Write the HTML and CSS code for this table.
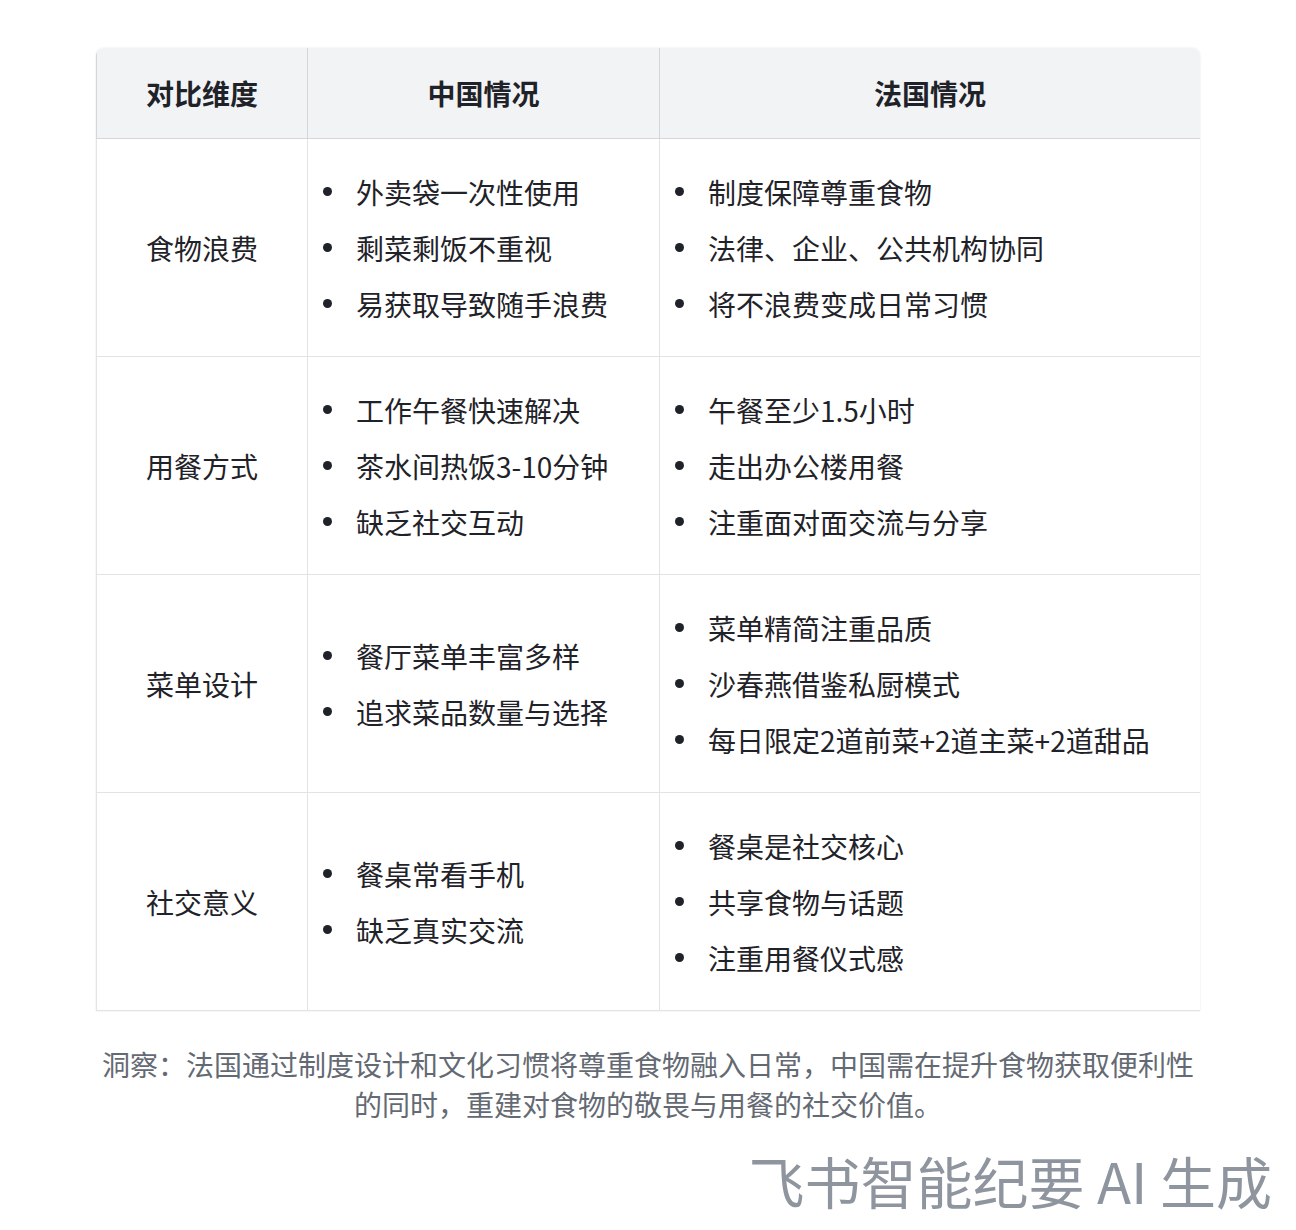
FILE: index.html
```html
<!DOCTYPE html>
<html lang="zh-CN">
<head>
<meta charset="utf-8">
<link rel="stylesheet" href="styles.css">
</head>
<body>
<div class="page">
  <div class="table-wrap">
    <table class="cmp">
      <colgroup>
        <col class="c1"><col class="c2"><col class="c3">
      </colgroup>
      <thead>
        <tr><th>对比维度</th><th>中国情况</th><th>法国情况</th></tr>
      </thead>
      <tbody>
        <tr>
          <td class="dim">食物浪费</td>
          <td><ul class="list"><li>外卖袋一次性使用</li><li>剩菜剩饭不重视</li><li>易获取导致随手浪费</li></ul></td>
          <td><ul class="list"><li>制度保障尊重食物</li><li>法律、企业、公共机构协同</li><li>将不浪费变成日常习惯</li></ul></td>
        </tr>
        <tr>
          <td class="dim">用餐方式</td>
          <td><ul class="list"><li>工作午餐快速解决</li><li>茶水间热饭3-10分钟</li><li>缺乏社交互动</li></ul></td>
          <td><ul class="list"><li>午餐至少1.5小时</li><li>走出办公楼用餐</li><li>注重面对面交流与分享</li></ul></td>
        </tr>
        <tr>
          <td class="dim">菜单设计</td>
          <td><ul class="list"><li>餐厅菜单丰富多样</li><li>追求菜品数量与选择</li></ul></td>
          <td><ul class="list"><li>菜单精简注重品质</li><li>沙春燕借鉴私厨模式</li><li>每日限定2道前菜+2道主菜+2道甜品</li></ul></td>
        </tr>
        <tr>
          <td class="dim">社交意义</td>
          <td><ul class="list"><li>餐桌常看手机</li><li>缺乏真实交流</li></ul></td>
          <td><ul class="list"><li>餐桌是社交核心</li><li>共享食物与话题</li><li>注重用餐仪式感</li></ul></td>
        </tr>
      </tbody>
    </table>
  </div>
  <p class="insight">洞察：法国通过制度设计和文化习惯将尊重食物融入日常，中国需在提升食物获取便利性的同时，重建对食物的敬畏与用餐的社交价值。</p>
</div>
<div class="watermark">飞书智能纪要 AI 生成</div>
</body>
</html>
```

FILE: styles.css
```css
html, body {
  margin: 0;
  padding: 0;
  background: #ffffff;
}
body {
  font-family: "Noto Sans CJK SC", "Noto Sans", sans-serif;
  color: #1f2329;
  width: 1296px;
  height: 1230px;
  overflow: hidden;
}
.page {
  width: 1104px;
  margin: 48px auto 0;
}
.table-wrap {
  border-radius: 8px 8px 0 0;
  overflow: hidden;
  box-shadow: 0 0 2px rgba(0,0,0,0.12);
}
.cmp {
  width: 100%;
  border-collapse: collapse;
  table-layout: fixed;
  font-size: 28px;
}
.c1 { width: 211px; }
.c2 { width: 352px; }
.c3 { width: 541px; }
.cmp th {
  background: #f2f3f5;
  height: 90px;
  padding: 0;
  font-weight: 700;
  text-align: center;
  border: 1px solid #d3d6db;
  border-top: none;
  line-height: 1;
}
.cmp td {
  height: 217px;
  padding: 0;
  vertical-align: middle;
  border: 1px solid #e3e3e3;
}
.cmp td.dim {
  text-align: center;
}
.list {
  list-style: none;
  margin: 0;
  padding: 0;
}
.list li {
  display: flex;
  align-items: center;
  line-height: 56px;
  white-space: nowrap;
}
.list li::before {
  content: "";
  flex: none;
  width: 9px;
  height: 9px;
  border-radius: 50%;
  background: #1f2329;
  margin-left: 15px;
  margin-right: 24px;
}
.insight {
  margin: 33px 0 0;
  font-size: 28px;
  line-height: 40px;
  color: #646a73;
  text-align: center;
}
.watermark {
  margin-top: 28px;
  padding-right: 24px;
  text-align: right;
  font-size: 56px;
  line-height: 56px;
  color: #8f959e;
}
```
